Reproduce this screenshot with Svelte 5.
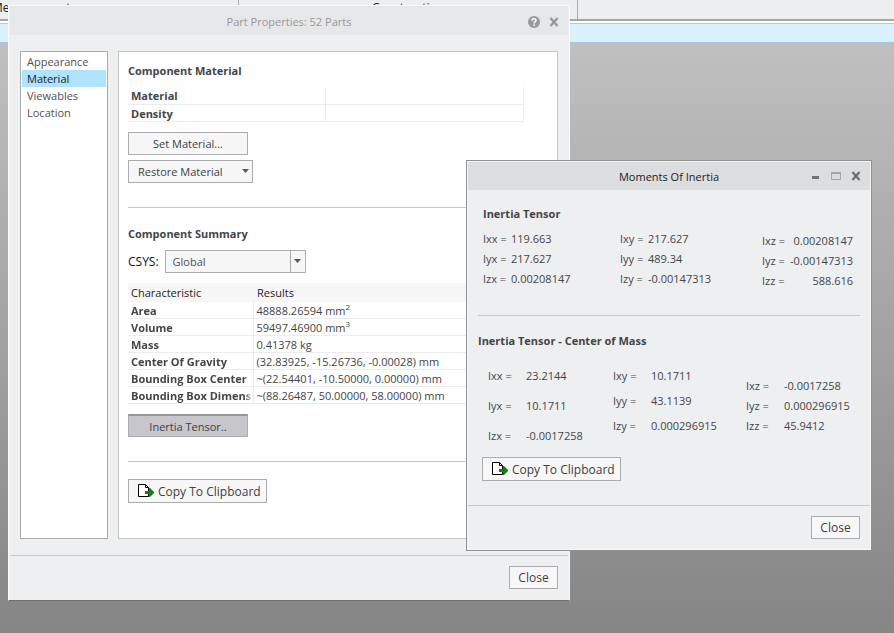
<script>
  const pages = ['Appearance', 'Material', 'Viewables', 'Location']
  let current = $state('Material')
  let csys = $state('Global')

  const summary = [
    { label: 'Area', value: '48888.26594 mm', power: '2' },
    { label: 'Volume', value: '59497.46900 mm', power: '3' },
    { label: 'Mass', value: '0.41378 kg' },
    { label: 'Center Of Gravity', value: '(32.83925, -15.26736, -0.00028) mm' },
    { label: 'Bounding Box Center', value: '~(22.54401, -10.50000, 0.00000) mm' },
    { label: 'Bounding Box Dimensions', value: '~(88.26487, 50.00000, 58.00000) mm' },
  ]

  // one entry per column of the tensor
  const tensor = [
    [['Ixx', '119.663'], ['Iyx', '217.627'], ['Izx', '0.00208147']],
    [['Ixy', '217.627'], ['Iyy', '489.34'], ['Izy', '-0.00147313']],
    [['Ixz', '0.00208147'], ['Iyz', '-0.00147313'], ['Izz', '588.616']],
  ]

  const massTensor = [
    [['Ixx', '23.2144'], ['Iyx', '10.1711'], ['Izx', '-0.0017258']],
    [['Ixy', '10.1711'], ['Iyy', '43.1139'], ['Izy', '0.000296915']],
    [['Ixz', '-0.0017258'], ['Iyz', '0.000296915'], ['Izz', '45.9412']],
  ]
</script>

{#snippet closeIcon()}
  <svg width="10" height="10" viewBox="0 0 10 10"><path d="M1.5 1l7 8M8.5 1l-7 8" stroke="currentColor" stroke-width="2.4" fill="none" /></svg>
{/snippet}

{#snippet arrow()}
  <svg class="arrow" width="7" height="4" viewBox="0 0 7 4"><path d="M0 0h7L3.5 4z" fill="currentColor" /></svg>
{/snippet}

{#snippet copyButton()}
  <button class="copy">
    <svg width="17" height="14" viewBox="0 0 17 14">
      <path d="M.5.5h7l3 3v9H.5z" fill="#fff" stroke="#000" />
      <path d="M7.5.5v3h3" fill="none" stroke="#000" />
      <path d="M7 7h4V4h1l4 4v1l-4 4h-1v-3H7z" fill="#0a850f" />
    </svg>
    Copy To Clipboard
  </button>
{/snippet}

{#snippet matrix(columns, kind)}
  <div class="matrix {kind}">
    {#each columns as column}
      <dl>
        {#each column as [name, value]}
          <div><dt>{name} =</dt><dd>{value}</dd></div>
        {/each}
      </dl>
    {/each}
  </div>
{/snippet}

<div class="desktop">
  <header class="ribbon">
    <span>Measurement</span>
    <span>Construction</span>
  </header>
  <div class="strip"></div>

  <section class="window props" aria-label="Part Properties">
    <div class="titlebar">
      <h1>Part Properties: 52 Parts</h1>
      <div class="tools">
        <button aria-label="Help">
          <svg width="12" height="12" viewBox="0 0 12 12">
            <circle cx="6" cy="6" r="6" fill="currentColor" />
            <path d="M4 4.7C4 2.2 8 2.2 8 4.5 8 5.8 6.1 5.8 6.1 7.4" stroke="#fff" stroke-width="1.5" fill="none" />
            <path d="M5.3 8.3h1.6v1.5H5.3z" fill="#fff" />
          </svg>
        </button>
        <button aria-label="Close window">{@render closeIcon()}</button>
      </div>
    </div>

    <div class="body">
      <nav>
        {#each pages as page}
          <button class:active={page === current} onclick={() => (current = page)}>{page}</button>
        {/each}
      </nav>

      <div class="panel">
        <h2>Component Material</h2>
        <table class="material">
          <tbody>
            <tr><th scope="row">Material</th><td></td></tr>
            <tr><th scope="row">Density</th><td></td></tr>
          </tbody>
        </table>
        <button class="wide">Set Material...</button>
        <button class="restore">Restore Material {@render arrow()}</button>
        <hr />

        <h2>Component Summary</h2>
        <div class="csys">
          <label for="csys">CSYS:</label>
          <div class="select">
            <select id="csys" bind:value={csys}>
              <option>Global</option>
            </select>
            <span class="drop">{@render arrow()}</span>
          </div>
        </div>
        <table class="summary">
          <thead>
            <tr><th scope="col">Characteristic</th><th scope="col">Results</th></tr>
          </thead>
          <tbody>
            {#each summary as row}
              <tr>
                <th scope="row"><span>{row.label}</span></th>
                <td>{row.value}{#if row.power}<sup>{row.power}</sup>{/if}</td>
              </tr>
            {/each}
          </tbody>
        </table>
        <button class="wide pressed">Inertia Tensor..</button>
        <hr />
        {@render copyButton()}
      </div>
    </div>

    <footer><button>Close</button></footer>
  </section>

  <section class="window moments" aria-label="Moments Of Inertia">
    <div class="titlebar">
      <h1>Moments Of Inertia</h1>
      <div class="tools">
        <button aria-label="Minimize">
          <svg width="10" height="10" viewBox="0 0 10 10"><path d="M1 5h7v3H1z" fill="currentColor" /></svg>
        </button>
        <button class="dim" aria-label="Maximize">
          <svg width="10" height="10" viewBox="0 0 10 10"><path d="M.5 1.5h9v7h-9z" fill="none" stroke="currentColor" /><path d="M0 1h10v2H0z" fill="currentColor" /></svg>
        </button>
        <button aria-label="Close window">{@render closeIcon()}</button>
      </div>
    </div>

    <div class="content">
      <h2 class="indent">Inertia Tensor</h2>
      {@render matrix(tensor, 'origin')}
      <hr />
      <h2>Inertia Tensor - Center of Mass</h2>
      {@render matrix(massTensor, 'mass')}
      {@render copyButton()}
    </div>

    <footer><button>Close</button></footer>
  </section>
</div>

<style>
  :global(body) { margin: 0; }
  .desktop {
    position: relative;
    min-height: 100vh;
    overflow: hidden;
    background: linear-gradient(#c4c4c4, #858585);
    font: 11px/17px "Open Sans", "Noto Sans", sans-serif;
    color: #444547;
  }
  .desktop * { box-sizing: border-box; }

  .ribbon {
    display: grid;
    grid-template-columns: 239px 339px 1fr;
    height: 21px;
    background: #edeef0;
    border-bottom: 2px solid #a5a5a2;
    font-size: 12px;
    color: #222;
  }
  .ribbon span { border-right: 1px solid #a9abad; text-align: center; line-height: 16px; }
  .ribbon span:first-child { text-align: left; text-indent: -8px; }
  .strip {
    height: 20px;
    background: #daf2fe;
    border-top: 1px solid #b3cbd9;
    border-bottom: 1px solid #afc4dc;
    box-shadow: 0 -2px #fff;
    margin-top: 2px;
  }

  .window { position: absolute; background: #eeeff1; }
  .props {
    left: 8px;
    top: 5px;
    width: 562px;
    border: 1px solid #fafafa;
    border-bottom-color: #707070;
  }
  .moments {
    left: 466px;
    top: 160px;
    width: 406px;
    border: 1px solid #8f9092;
    box-shadow: inset 0 0 0 1px #f7f7f8;
  }

  .titlebar {
    display: grid;
    grid-template-columns: 1fr auto 1fr;
    align-items: center;
    height: 29px;
    margin: 0 1px;
    padding-top: 2px;
    background: #e6e7e9;
    color: #98999b;
  }
  .moments .titlebar { height: 28px; margin: 1px 1px 0; padding-top: 0; background: #dcddde; color: #707173; }
  h1 { grid-column: 2; margin: 0; font-size: 11px; font-weight: 400; }
  .moments h1 { color: #222; }
  .tools { display: flex; align-items: center; justify-content: flex-end; gap: 9px; padding-right: 9px; }
  .moments .tools { gap: 10px; }
  .tools button { height: auto; padding: 0; border: 0; background: none; color: inherit; }
  .tools .dim { color: #a3a4a6; }
  svg { display: block; flex: none; }

  h2 { margin: 0; font-size: 11px; font-weight: 700; line-height: 17px; }
  hr { width: 100%; margin: 24px 0 17px; border: 0; border-top: 1px solid #c6c7ca; }

  button {
    height: 23px;
    padding: 0 9px;
    border: 1px solid #abacaf;
    background: #f7f7f8;
    font: inherit;
    line-height: 17px;
    color: #3f4043;
  }
  .wide { width: 120px; }
  .pressed { border-top: 2px solid #97979a; background: #c6c6cb; }
  .copy { display: flex; align-items: center; gap: 3px; width: 139px; height: 24px; padding: 0 0 0 9px; font-size: 12px; white-space: nowrap; }
  .restore { display: flex; align-items: center; justify-content: space-between; width: 125px; margin-top: 5px; padding-right: 3px; }
  .arrow { color: #5a5b5d; }

  .body { display: flex; gap: 10px; margin: 0 1px; padding: 16px 10px; border-bottom: 1px solid #c6c7ca; }
  nav { width: 88px; padding: 1px; border: 1px solid #abacaf; background: #fff; }
  nav button { display: block; width: 100%; height: 17px; padding: 0 5px; border: 0; background: none; text-align: left; color: #505153; }
  nav .active { background: #b0e3fc; color: #222; }
  .panel {
    flex: 1;
    display: flex;
    flex-direction: column;
    align-items: flex-start;
    padding: 10px 9px 35px;
    border: 1px solid #c6c7ca;
    background: #fff;
  }

  table { border-collapse: collapse; table-layout: fixed; width: 396px; }
  th, td { height: 17px; padding: 2px 3px 0; border-bottom: 1px solid #ebecee; text-align: left; line-height: 14px; white-space: nowrap; }
  td { border-left: 1px solid #ebecee; }
  .material { margin: 8px 0 10px; }
  .material td { border-right: 1px solid #ebecee; }
  .csys { display: flex; align-items: center; gap: 6px; margin: 8px 0 10px; font-size: 12px; color: #111; }
  .select { position: relative; }
  select {
    appearance: none;
    display: block;
    width: 141px;
    height: 23px;
    padding: 0 7px;
    border: 1px solid #abacaf;
    border-radius: 0;
    background: #f7f7f8;
    font: inherit;
    font-size: 11px;
    color: #505153;
  }
  .drop {
    position: absolute;
    top: 0;
    right: 0;
    display: grid;
    place-items: center;
    width: 16px;
    height: 23px;
    border: 1px solid #abacaf;
    pointer-events: none;
  }
  .summary { margin-bottom: 10px; }
  .summary th:first-child { width: 125px; }
  .summary thead th { height: 19px; border: 0; background: #f7f7f8; font-weight: 400; color: #222; }
  .summary thead th:last-child { padding-left: 4px; }
  .summary th span {
    display: block;
    overflow: hidden;
    margin-right: -3px;
    mask-image: linear-gradient(to left, transparent, #000 8px);
  }
  sup { font-size: 8px; line-height: 0; vertical-align: 5px; }

  .content { padding: 15px 11px 24px; }
  .indent { margin-left: 5px; }
  .content hr { margin: 24px 0 16px; }
  .content .copy { margin: 6px 0 0 4px; }
  .matrix { display: grid; line-height: 20px; }
  dl { margin: 0; }
  dl div { display: flex; white-space: nowrap; }
  dd { margin: 0; }
  .origin { grid-template-columns: 137px 142px 1fr; margin: 7px 7px 0 5px; }
  .origin dt { width: 28px; }
  .origin dl:last-child { padding-top: 2px; }
  .origin dl:last-child dd { flex: 1; text-align: right; }
  .mass { grid-template-columns: 125px 133px 1fr; margin: 12px 0 0 10px; }
  .mass dt { width: 38px; }
  .mass dl:nth-child(1) { line-height: 30px; }
  .mass dl:nth-child(2) { line-height: 25px; padding-top: 2px; }
  .mass dl:nth-child(3) { padding-top: 15px; }

  footer { display: flex; justify-content: flex-end; padding: 10px 11px 11px; }
  footer button { width: 49px; padding: 0; font-size: 12px; }
  .moments footer { margin: 0 1px; padding: 10px 10px 11px; border-top: 1px solid #c6c7ca; }
</style>
